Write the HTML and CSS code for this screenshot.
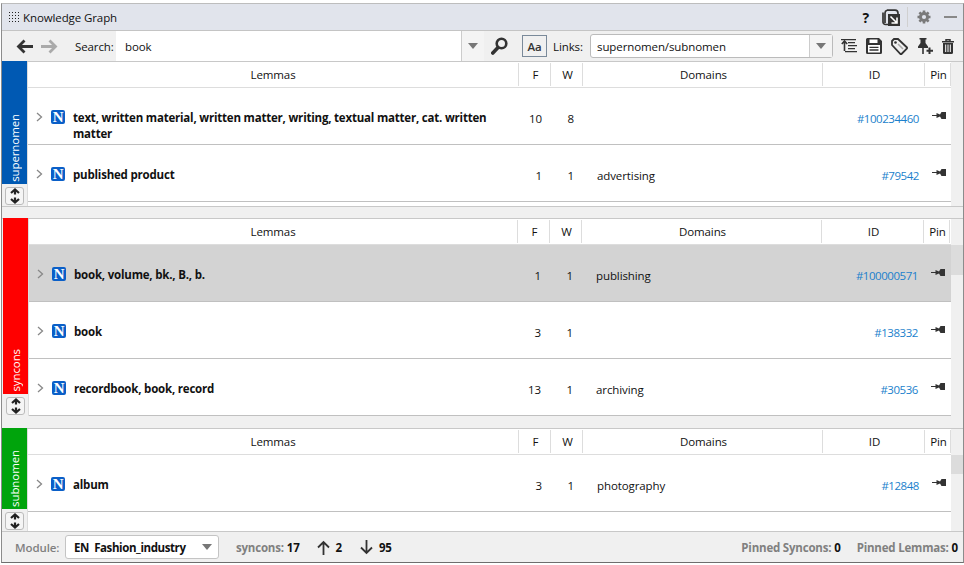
FILE: index.html
```html
<!DOCTYPE html>
<html>
<head>
    <title>Knowledge Graph</title>
    <link rel="stylesheet" href="styles.css">
</head>
<body>
    <div class="window">
        <!-- Title bar -->
        <div class="titlebar">
            <svg class="grip" width="12" height="12" viewBox="0 0 12 12" fill="#222">
                <rect x="0" y="1" width="1" height="1"/><rect x="3" y="1" width="1" height="1"/><rect x="6" y="1" width="1" height="1"/><rect x="9" y="1" width="1" height="1"/>
                <rect x="0" y="4" width="1" height="1"/><rect x="3" y="4" width="1" height="1"/><rect x="6" y="4" width="1" height="1"/><rect x="9" y="4" width="1" height="1"/>
                <rect x="0" y="7" width="1" height="1"/><rect x="3" y="7" width="1" height="1"/><rect x="6" y="7" width="1" height="1"/><rect x="9" y="7" width="1" height="1"/>
                <rect x="0" y="10" width="1" height="1"/><rect x="3" y="10" width="1" height="1"/><rect x="6" y="10" width="1" height="1"/><rect x="9" y="10" width="1" height="1"/>
            </svg>
            <span class="title">Knowledge Graph</span>
            <span class="help">?</span>
            <svg class="popout" width="18" height="17" viewBox="0 0 18 17">
                <path d="M5 1.2H13a3 3 0 0 1 3 3V5M3 14V4a3 3 0 0 1 2-2.8" fill="none" stroke="#333" stroke-width="1.7"/>
                <path d="M1 3.5V13a2.5 2.5 0 0 0 2.5 2.5H6" fill="none" stroke="#333" stroke-width="1.7"/>
                <rect x="6" y="5" width="12" height="12" fill="#333"/>
                <path d="M8.5 7.5L14.5 13.5M15 8.5V14H9.5" stroke="#fff" stroke-width="1.6" fill="none"/>
            </svg>
            <span class="title-sep"></span>
            <svg class="gear" width="14" height="14" viewBox="0 0 14 14">
                <path d="M7 0.5V13.5M0.5 7H13.5M2.4 2.4L11.6 11.6M11.6 2.4L2.4 11.6" stroke="#7a7a7a" stroke-width="2.6"/>
                <circle cx="7" cy="7" r="5" fill="#7a7a7a"/>
                <circle cx="7" cy="7" r="2.1" fill="#e1e4ec"/>
            </svg>
            <span class="minimize"></span>
        </div>

        <!-- Toolbar -->
        <div class="toolbar">
            <svg class="nav-back" width="17" height="15" viewBox="0 0 17 15">
                <path d="M17 7.5H3M8.5 1.5L2.5 7.5L8.5 13.5" fill="none" stroke="#333" stroke-width="2.8"/>
            </svg>
            <svg class="nav-next" width="17" height="15" viewBox="0 0 17 15">
                <path d="M0 7.5H14M8.5 1.5L14.5 7.5L8.5 13.5" fill="none" stroke="#aaa" stroke-width="2.8"/>
            </svg>
            <span class="search-label">Search:</span>
            <div class="search-box">
                <span class="search-value">book</span>
                <span class="combo-btn"><span class="caret"></span></span>
            </div>
            <svg class="lens" width="17" height="18" viewBox="0 0 17 18">
                <circle cx="10.5" cy="6.5" r="4.8" fill="none" stroke="#333" stroke-width="2.6"/>
                <path d="M7 10.5L1.8 16" stroke="#333" stroke-width="3.6" stroke-linecap="round"/>
            </svg>
            <span class="case-btn">Aa</span>
            <span class="links-label">Links:</span>
            <div class="links-box">
                <span class="links-value">supernomen/subnomen</span>
                <span class="combo-btn"><span class="caret"></span></span>
            </div>
            <div class="tools">
                <svg width="16" height="15" viewBox="0 0 16 15">
                    <path d="M3.5 12V3M0.8 5L3.5 2L6.2 5" fill="none" stroke="#333" stroke-width="1.6"/>
                    <path d="M0 0.7H15M7 3.7H14M7 6.7H16M7 9.7H14M4 12.7H16" stroke="#333" stroke-width="1.2"/>
                </svg>
                <svg width="16" height="16" viewBox="0 0 16 16">
                    <path d="M0 1.5A1.5 1.5 0 0 1 1.5 0H13L16 3V14.5A1.5 1.5 0 0 1 14.5 16H1.5A1.5 1.5 0 0 1 0 14.5Z" fill="#333"/>
                    <rect x="3.5" y="1.5" width="8" height="3.5" fill="#fff"/>
                    <rect x="2" y="7" width="12" height="7.5" fill="#fff"/>
                    <path d="M3.5 9.3H12.5M3.5 12H12.5" stroke="#333" stroke-width="1.3"/>
                </svg>
                <svg width="17" height="17" viewBox="0 0 17 17">
                    <path d="M1 3L3 1H7L16 9.5V10.5L10.5 16H9.5L1 7Z" fill="none" stroke="#333" stroke-width="1.8"/>
                    <circle cx="4.5" cy="4.5" r="1.3" fill="#333"/>
                    <path d="M7 6L12 11" stroke="#aaa" stroke-width="1.6"/>
                </svg>
                <svg width="16" height="16" viewBox="0 0 16 16">
                    <path d="M2.5 0H9.5V1.5H8.5V5L11 8.5V10H1V8.5L3.5 5V1.5H2.5Z" fill="#333"/>
                    <path d="M6 10V16" stroke="#333" stroke-width="1.6"/>
                    <path d="M12.5 9.5V16M9.5 12.8H16" stroke="#333" stroke-width="2"/>
                </svg>
                <svg width="12" height="15" viewBox="0 0 12 15">
                    <path d="M0 2.7H12M4 2V0.8H8V2" fill="none" stroke="#333" stroke-width="1.5"/>
                    <path d="M1 4H11V13.5A1.5 1.5 0 0 1 9.5 15H2.5A1.5 1.5 0 0 1 1 13.5Z" fill="#333"/>
                    <path d="M3.7 5.5V13M6 5.5V13M8.3 5.5V13" stroke="#fff" stroke-width="1"/>
                </svg>
            </div>
        </div>

        <!-- supernomen -->
        <div class="section section-first">
            <div class="side">
                <div class="strip strip-blue"><span>supernomen</span></div>
                <div class="expander"><svg width="12" height="16" viewBox="0 0 12 16"><path d="M6 1.5V6.5M2 5L6 1.5L10 5M6 9.5V14.5M2 11L6 14.5L10 11" fill="none" stroke="#222" stroke-width="2.2"/></svg></div>
            </div>
            <div class="table">
                <div class="row head">
                    <div class="cell">Lemmas</div><div class="cell">F</div><div class="cell">W</div><div class="cell">Domains</div><div class="cell">ID</div><div class="cell">Pin</div>
                </div>
                <div class="row item">
                    <div class="lemma">
                        <svg class="chev" width="7" height="10" viewBox="0 0 7 10"><path d="M1 1L5.5 5L1 9" fill="none" stroke="#888" stroke-width="1.3"/></svg>
                        <span class="badge">N</span>
                        <b>text, written material, written matter, writing, textual matter, cat. written matter</b>
                    </div>
                    <div class="num">10</div><div class="num">8</div><div class="domain"></div><div class="id">#100234460</div>
                    <div class="pin"><svg width="14" height="9" viewBox="0 0 14 9"><path d="M0 4.5H5" stroke="#333" stroke-width="1"/><path d="M4.5 2L8 3.5L9.5 1H14V8H9.5L8 5.5L4.5 7Z" fill="#333"/></svg></div>
                </div>
                <div class="row item">
                    <div class="lemma">
                        <svg class="chev" width="7" height="10" viewBox="0 0 7 10"><path d="M1 1L5.5 5L1 9" fill="none" stroke="#888" stroke-width="1.3"/></svg>
                        <span class="badge">N</span>
                        <b>published product</b>
                    </div>
                    <div class="num">1</div><div class="num">1</div><div class="domain">advertising</div><div class="id">#79542</div>
                    <div class="pin"><svg width="14" height="9" viewBox="0 0 14 9"><path d="M0 4.5H5" stroke="#333" stroke-width="1"/><path d="M4.5 2L8 3.5L9.5 1H14V8H9.5L8 5.5L4.5 7Z" fill="#333"/></svg></div>
                </div>
                <div class="filler"></div>
            </div>
            <div class="gutter"></div>
        </div>

        <!-- syncons -->
        <div class="section section-mid">
            <div class="side">
                <div class="strip strip-red"><span>syncons</span></div>
                <div class="expander"><svg width="12" height="16" viewBox="0 0 12 16"><path d="M6 1.5V6.5M2 5L6 1.5L10 5M6 9.5V14.5M2 11L6 14.5L10 11" fill="none" stroke="#222" stroke-width="2.2"/></svg></div>
            </div>
            <div class="table">
                <div class="row head">
                    <div class="cell">Lemmas</div><div class="cell">F</div><div class="cell">W</div><div class="cell">Domains</div><div class="cell">ID</div><div class="cell">Pin</div>
                </div>
                <div class="row item selected">
                    <div class="lemma">
                        <svg class="chev" width="7" height="10" viewBox="0 0 7 10"><path d="M1 1L5.5 5L1 9" fill="none" stroke="#888" stroke-width="1.3"/></svg>
                        <span class="badge">N</span>
                        <b>book, volume, bk., B., b.</b>
                    </div>
                    <div class="num">1</div><div class="num">1</div><div class="domain">publishing</div><div class="id">#100000571</div>
                    <div class="pin"><svg width="14" height="9" viewBox="0 0 14 9"><path d="M0 4.5H5" stroke="#333" stroke-width="1"/><path d="M4.5 2L8 3.5L9.5 1H14V8H9.5L8 5.5L4.5 7Z" fill="#333"/></svg></div>
                </div>
                <div class="row item">
                    <div class="lemma">
                        <svg class="chev" width="7" height="10" viewBox="0 0 7 10"><path d="M1 1L5.5 5L1 9" fill="none" stroke="#888" stroke-width="1.3"/></svg>
                        <span class="badge">N</span>
                        <b>book</b>
                    </div>
                    <div class="num">3</div><div class="num">1</div><div class="domain"></div><div class="id">#138332</div>
                    <div class="pin"><svg width="14" height="9" viewBox="0 0 14 9"><path d="M0 4.5H5" stroke="#333" stroke-width="1"/><path d="M4.5 2L8 3.5L9.5 1H14V8H9.5L8 5.5L4.5 7Z" fill="#333"/></svg></div>
                </div>
                <div class="row item">
                    <div class="lemma">
                        <svg class="chev" width="7" height="10" viewBox="0 0 7 10"><path d="M1 1L5.5 5L1 9" fill="none" stroke="#888" stroke-width="1.3"/></svg>
                        <span class="badge">N</span>
                        <b>recordbook, book, record</b>
                    </div>
                    <div class="num">13</div><div class="num">1</div><div class="domain">archiving</div><div class="id">#30536</div>
                    <div class="pin"><svg width="14" height="9" viewBox="0 0 14 9"><path d="M0 4.5H5" stroke="#333" stroke-width="1"/><path d="M4.5 2L8 3.5L9.5 1H14V8H9.5L8 5.5L4.5 7Z" fill="#333"/></svg></div>
                </div>
            </div>
            <div class="gutter"><span class="thumb thumb-mid"></span></div>
        </div>

        <!-- subnomen -->
        <div class="section section-last">
            <div class="side">
                <div class="strip strip-green"><span>subnomen</span></div>
                <div class="expander"><svg width="12" height="16" viewBox="0 0 12 16"><path d="M6 1.5V6.5M2 5L6 1.5L10 5M6 9.5V14.5M2 11L6 14.5L10 11" fill="none" stroke="#222" stroke-width="2.2"/></svg></div>
            </div>
            <div class="table">
                <div class="row head">
                    <div class="cell">Lemmas</div><div class="cell">F</div><div class="cell">W</div><div class="cell">Domains</div><div class="cell">ID</div><div class="cell">Pin</div>
                </div>
                <div class="row item">
                    <div class="lemma">
                        <svg class="chev" width="7" height="10" viewBox="0 0 7 10"><path d="M1 1L5.5 5L1 9" fill="none" stroke="#888" stroke-width="1.3"/></svg>
                        <span class="badge">N</span>
                        <b>album</b>
                    </div>
                    <div class="num">3</div><div class="num">1</div><div class="domain">photography</div><div class="id">#12848</div>
                    <div class="pin"><svg width="14" height="9" viewBox="0 0 14 9"><path d="M0 4.5H5" stroke="#333" stroke-width="1"/><path d="M4.5 2L8 3.5L9.5 1H14V8H9.5L8 5.5L4.5 7Z" fill="#333"/></svg></div>
                </div>
            </div>
            <div class="gutter"><span class="thumb thumb-last"></span></div>
        </div>

        <!-- Footer -->
        <div class="footer">
            <span class="module-label">Module:</span>
            <div class="module-box">
                <span>EN&nbsp; Fashion_industry</span>
                <span class="caret"></span>
            </div>
            <b class="muted syncons">syncons:</b><b class="count count-tight">17</b>
            <svg class="arrow" width="13" height="15" viewBox="0 0 13 15"><path d="M6.5 15V2M1 7.5L6.5 2L12 7.5" fill="none" stroke="#333" stroke-width="1.8"/></svg>
            <b class="count">2</b>
            <svg class="arrow arrow-down" width="13" height="15" viewBox="0 0 13 15"><path d="M6.5 0V13M1 7.5L6.5 13L12 7.5" fill="none" stroke="#333" stroke-width="1.8"/></svg>
            <b class="count">95</b>
            <b class="muted pinned">Pinned Syncons:</b><b class="count count-tight">0</b>
            <b class="muted pinned-lemmas">Pinned Lemmas:</b><b class="count count-tight">0</b>
        </div>
    </div>
</body>
</html>
```

FILE: styles.css
```css
html, body {
    margin: 0;
    padding: 0;
    background: #fff;
}

body {
    font-family: "Open Sans", sans-serif;
    font-size: 11.5px;
    letter-spacing: -0.1px;
    color: #111;
    overflow: hidden;
}

b {
    font-weight: 700;
    letter-spacing: -0.2px;
}

.window {
    width: 961px;
    height: 558px;
    margin: 3px 0 0 1px;
    border: 1px solid #8c8c8c;
    border-top-color: #bdbdbd;
    border-bottom-color: #6e6e6e;
    display: flex;
    flex-direction: column;
    background: #f0f0f0;
    overflow: hidden;
}

.titlebar {
    height: 26px;
    flex: none;
    display: flex;
    align-items: center;
    background: #e1e4ec;
    border-bottom: 1px solid #c4c4c4;
}

.grip {
    margin-left: 7px;
}

.title {
    margin-left: 2px;
}

.help {
    margin-left: auto;
    font-weight: 700;
    font-size: 14px;
}

.popout {
    margin-left: 13px;
}

.title-sep {
    width: 1px;
    height: 20px;
    background: #d0d0d0;
    margin-left: 7px;
}

.gear {
    margin-left: 9px;
}

.minimize {
    width: 13px;
    height: 2px;
    background: #888;
    margin: 0 6px 0 13px;
}

.toolbar {
    height: 31px;
    flex: none;
    display: flex;
    align-items: center;
    border-bottom: 1px solid #c8c8c8;
    box-sizing: border-box;
}

.nav-back {
    margin-left: 14px;
}

.nav-next {
    margin-left: 8px;
}

.search-label {
    width: 41px;
    margin-left: 17px;
}

.search-box {
    width: 368px;
    height: 100%;
    background: #fff;
    display: flex;
    align-items: center;
}

.search-value {
    margin-left: 9px;
    flex: 1;
}

.combo-btn {
    width: 22px;
    height: 100%;
    border-left: 1px solid #ccc;
    display: flex;
    align-items: center;
    justify-content: center;
    background: #f4f4f4;
}

.caret {
    width: 0;
    height: 0;
    border-left: 5px solid transparent;
    border-right: 5px solid transparent;
    border-top: 6px solid #777;
}

.lens {
    margin-left: 7px;
}

.case-btn {
    width: 25px;
    height: 22px;
    margin-left: 14px;
    border: 1px solid #7a8a9a;
    box-sizing: border-box;
    display: flex;
    align-items: center;
    justify-content: center;
    font-weight: 600;
    color: #333;
}

.links-label {
    width: 36px;
    margin-left: 6px;
}

.links-box {
    width: 243px;
    height: 24px;
    margin-left: 1px;
    background: #fff;
    border: 1px solid #bbb;
    border-radius: 3px;
    box-sizing: border-box;
    display: flex;
    align-items: center;
}

.links-value {
    flex: 1;
    margin-left: 6px;
}

.tools {
    display: flex;
    align-items: center;
    gap: 9px;
    margin-left: 8px;
}

.section {
    display: flex;
    flex: none;
}

.section-first {
    height: 144px;
    border-bottom: 1px solid #c8c8c8;
}

.section-mid {
    height: 197px;
    margin-top: 11px;
    border-top: 1px solid #c8c8c8;
}

.section-last {
    flex: 1;
    margin-top: 12px;
    border-top: 1px solid #c8c8c8;
    border-bottom: 1px solid #c8c8c8;
}

.side {
    width: 25px;
    flex: none;
    display: flex;
    flex-direction: column;
    align-items: center;
    border-right: 1px solid #ddd;
}

.section-mid .side {
    padding-left: 1px;
}

.strip {
    width: 100%;
    flex: 1;
    margin-top: -1px;
    color: #fff;
    display: flex;
    align-items: flex-end;
    justify-content: center;
}

.strip span {
    writing-mode: vertical-rl;
    transform: rotate(180deg);
    padding-top: 2px;
}

.strip-blue {
    background: #0059b3;
}

.strip-red {
    background: #ff0000;
}

.strip-green {
    background: #00a40c;
}

.expander {
    width: 19px;
    height: 18px;
    margin: 3px 0 1px;
    border: 1px solid #bbb;
    border-radius: 3px;
    box-sizing: border-box;
    background: #f5f5f5;
    display: flex;
    align-items: center;
    justify-content: center;
    flex: none;
}

.table {
    flex: 1;
    min-width: 0;
    background: #fff;
    display: flex;
    flex-direction: column;
}

.row {
    display: grid;
    grid-template-columns: 491px 32px 32px 240px 102px 26px;
}

.section-mid .row {
    grid-template-columns: 489px 32px 32px 240px 102px 26px;
}

.head {
    height: 25px;
    border-bottom: 1px solid #ddd;
    flex: none;
}

.cell {
    display: flex;
    align-items: center;
    justify-content: center;
    border-right: 1px solid #ddd;
    margin: 1px 0 1px;
}

.cell + .cell {
    padding-left: 2px;
}

.item {
    height: 56px;
    border-bottom: 1px solid #c0c0c0;
    align-items: center;
}

.selected {
    background: #d3d3d3;
}

.lemma {
    display: flex;
    align-self: start;
    padding: 21px 24px 0 8px;
}

.lemma b {
    margin-left: 8px;
    padding-top: 1px;
    line-height: 16px;
}

.chev {
    flex: none;
    margin: 3px 8px 0 0;
}

.badge {
    width: 14px;
    height: 14px;
    margin-top: 1px;
    flex: none;
    background: #0a5fc8;
    border-radius: 2px;
    color: #fff;
    font-family: "Liberation Serif", serif;
    font-weight: 700;
    font-size: 15px;
    line-height: 14px;
    text-align: center;
}

.num {
    text-align: right;
    padding: 4px 9px 0 0;
}

.domain {
    padding: 4px 0 0 14px;
}

.id {
    text-align: right;
    color: #1b7fcc;
    letter-spacing: -0.45px;
    padding: 4px 6px 0 0;
}

.pin {
    padding-left: 7px;
    margin-top: -2px;
    line-height: 0;
}

.filler {
    flex: 1;
}

.gutter {
    width: 12px;
    flex: none;
    position: relative;
}

.thumb {
    position: absolute;
    left: 0;
    width: 12px;
    background: #dcdcdc;
}

.thumb-mid {
    top: 26px;
    height: 30px;
}

.thumb-last {
    top: 26px;
    height: 19px;
}

.footer {
    height: 30px;
    flex: none;
    display: flex;
    align-items: center;
    padding-right: 5px;
}

.module-label {
    color: #808080;
    font-weight: 600;
    width: 50px;
    margin-left: 13px;
}

.muted {
    color: #808080;
}

.module-box {
    width: 154px;
    height: 24px;
    background: #fff;
    border: 1px solid #c4c4c4;
    border-radius: 3px;
    box-sizing: border-box;
    display: flex;
    align-items: center;
    justify-content: space-between;
    padding: 0 6px 0 8px;
    font-weight: 700;
    letter-spacing: -0.4px;
}

.syncons {
    margin-left: 17px;
}

.count {
    margin-left: 5px;
    color: #111;
}

.count-tight {
    margin-left: 3px;
}

.arrow {
    margin: 0 1px 0 17px;
}

.arrow-down {
    margin-left: 18px;
}

.pinned {
    margin-left: auto;
}

.pinned-lemmas {
    margin-left: 16px;
}
```
